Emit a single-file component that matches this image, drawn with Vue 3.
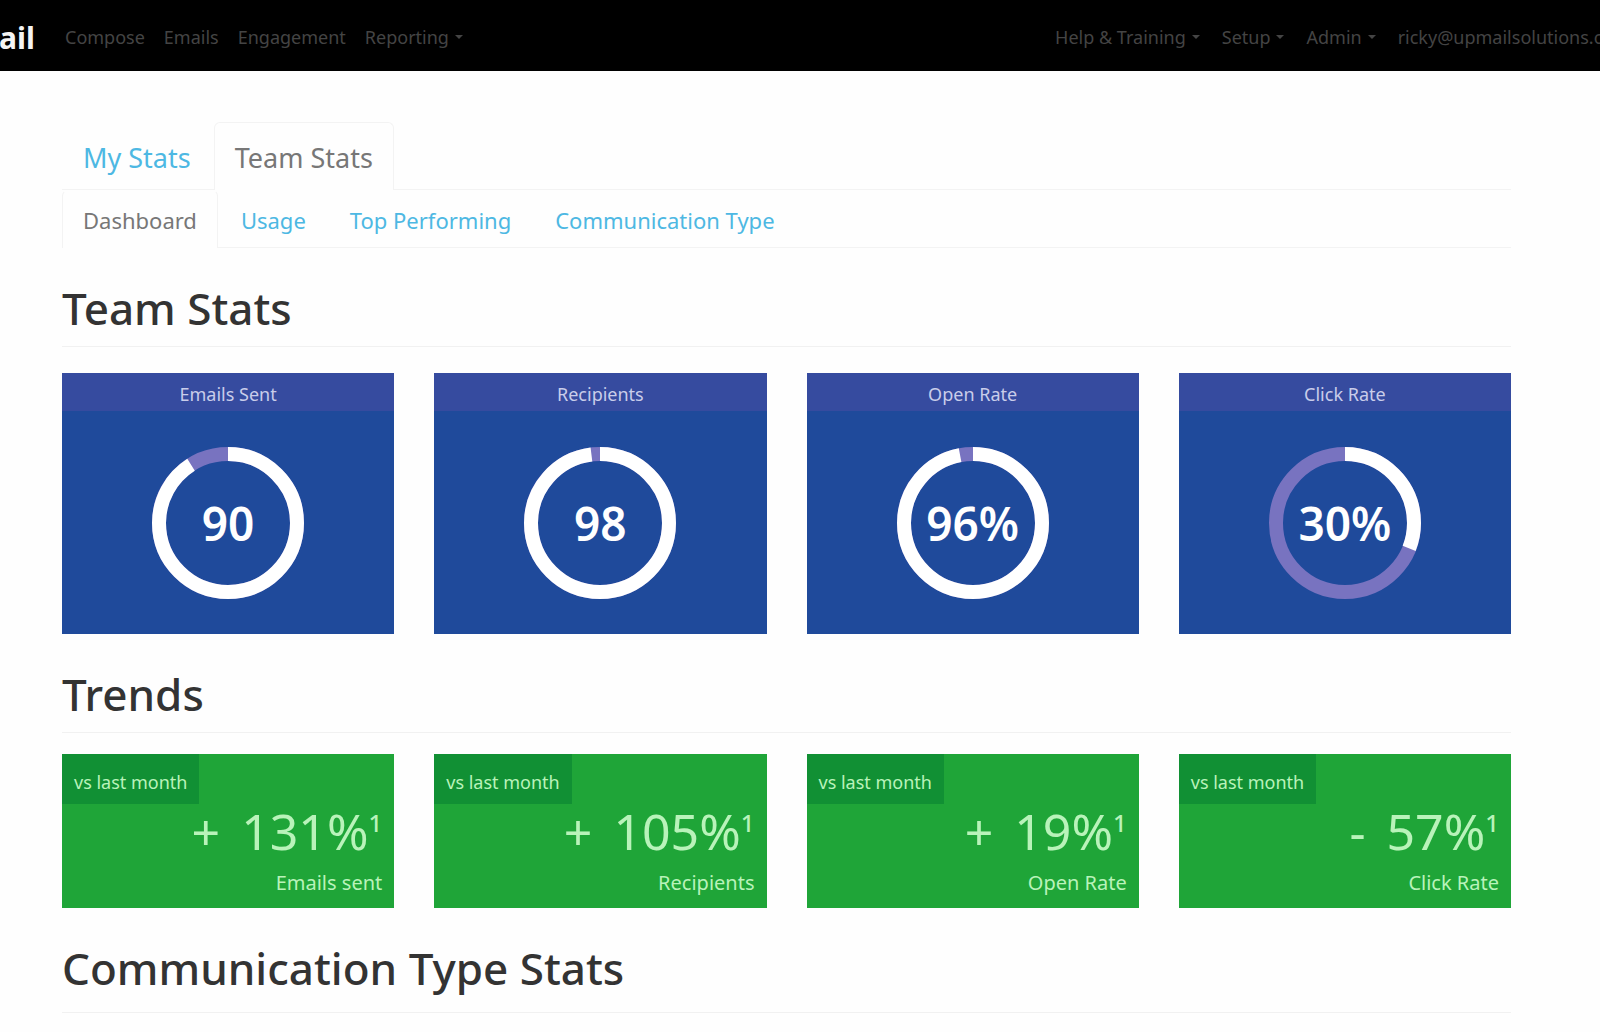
<script setup>
const leftLinks = [
  { label: 'Compose' },
  { label: 'Emails' },
  { label: 'Engagement' },
  { label: 'Reporting', menu: true },
]
const rightLinks = [
  { label: 'Help & Training', menu: true },
  { label: 'Setup', menu: true },
  { label: 'Admin', menu: true },
  { label: 'ricky@upmailsolutions.com' },
]
const subTabs = ['Dashboard', 'Usage', 'Top Performing', 'Communication Type']
const stats = [
  { label: 'Emails Sent', value: '90', percent: 91 },
  { label: 'Recipients', value: '98', percent: 98 },
  { label: 'Open Rate', value: '96%', percent: 97 },
  { label: 'Click Rate', value: '30%', percent: 31 },
]
const trends = [
  { label: 'Emails sent', sign: '+', value: '131%' },
  { label: 'Recipients', sign: '+', value: '105%' },
  { label: 'Open Rate', sign: '+', value: '19%' },
  { label: 'Click Rate', sign: '-', value: '57%' },
]
</script>

<template>
  <header class="topbar">
    <a class="brand" href="#">ail</a>
    <nav class="links">
      <a v-for="l in leftLinks" :key="l.label" href="#">{{ l.label }}<i v-if="l.menu" class="caret"></i></a>
    </nav>
    <nav class="links account">
      <a v-for="l in rightLinks" :key="l.label" href="#">{{ l.label }}<i v-if="l.menu" class="caret"></i></a>
    </nav>
  </header>

  <main class="page">
    <nav class="tabs">
      <a href="#">My Stats</a>
      <a href="#" class="active">Team Stats</a>
    </nav>
    <nav class="tabs sub">
      <a v-for="(t, i) in subTabs" :key="t" href="#" :class="{ active: i === 0 }">{{ t }}</a>
    </nav>

    <h2>Team Stats</h2>
    <section class="grid">
      <article v-for="s in stats" :key="s.label" class="stat">
        <h3>{{ s.label }}</h3>
        <div class="dial">
          <svg viewBox="0 0 152 152" aria-hidden="true">
            <circle class="track" cx="76" cy="76" r="69" />
            <circle class="value" cx="76" cy="76" r="69" pathLength="100" :stroke-dasharray="`${s.percent} 100`" />
          </svg>
          <strong>{{ s.value }}</strong>
        </div>
      </article>
    </section>

    <h2 class="tight">Trends</h2>
    <section class="grid">
      <article v-for="t in trends" :key="t.label" class="trend">
        <span class="badge">vs last month</span>
        <p class="change"><span class="sign">{{ t.sign }}</span> {{ t.value }}<sup>1</sup></p>
        <p class="name">{{ t.label }}</p>
      </article>
    </section>

    <h2 class="last">Communication Type Stats</h2>
  </main>
</template>

<style>
body {
  margin: 0;
  background: #fefefe;
  overflow-x: hidden;
}
</style>

<style scoped>
.topbar,
.page {
  font-family: "Noto Sans", "Open Sans", sans-serif;
}
a {
  text-decoration: none;
}
.topbar {
  display: flex;
  align-items: center;
  height: 71px;
  overflow: hidden;
  background: #000;
  white-space: nowrap;
}
.brand {
  display: flex;
  justify-content: flex-end;
  width: 35px;
  flex: none;
  padding-top: 4px;
  color: #f4f4f4;
  font-size: 30px;
  font-weight: 700;
}
.links {
  display: flex;
  gap: 19px;
  margin-left: 30px;
  padding-top: 2px;
  font-size: 18px;
}
.links a {
  color: #444;
}
.account {
  gap: 22px;
  margin-left: auto;
  margin-right: -30px;
}
.caret {
  display: inline-block;
  margin-left: 6px;
  vertical-align: 5px;
  border: 4px solid transparent;
  border-top-color: currentColor;
  border-bottom: 0;
}
.page {
  padding: 51px 89px 0 62px;
  color: #333;
}
.tabs {
  display: flex;
  gap: 2px;
  height: 67px;
  border-bottom: 1px solid #f3f3f3;
  font-size: 27px;
  line-height: 70px;
}
.tabs a {
  box-sizing: border-box;
  height: 68px;
  padding: 0 20px;
  border: 1px solid transparent;
  border-bottom: 0;
  color: #4db8e3;
  white-space: nowrap;
}
.tabs .active {
  border-color: #f3f3f3;
  border-radius: 6px 6px 0 0;
  background: #fefefe;
  color: #777;
}
.sub {
  height: 57px;
  font-size: 22px;
  line-height: 58px;
}
.sub a {
  height: 58px;
}
.sub .active {
  border-top-color: transparent;
}
h2 {
  margin: 0 0 26px;
  padding: 28px 0 6px;
  border-bottom: 1px solid #f1f1f1;
  font-size: 44px;
  font-weight: 500;
  line-height: 64px;
}
.tight {
  margin-bottom: 21px;
}
.last {
  padding-bottom: 12px;
}
.grid {
  display: grid;
  grid-template-columns: repeat(4, 1fr);
  gap: 40px;
}
.stat {
  background: #1f4a9b;
  color: #fff;
}
h3 {
  margin: 0;
  padding-top: 4px;
  background: #364b9f;
  color: #c9cdea;
  font-size: 18px;
  font-weight: 400;
  line-height: 34px;
  text-align: center;
}
.dial {
  display: grid;
  place-items: center;
  height: 223px;
}
.dial > * {
  grid-area: 1 / 1;
}
.dial svg {
  width: 152px;
  transform: rotate(-90deg);
}
circle {
  fill: none;
  stroke-width: 14px;
}
.track {
  stroke: #7873c0;
}
.value {
  stroke: #fff;
}
.dial strong {
  font-size: 46px;
  font-weight: 600;
  line-height: 48px;
}
.trend {
  display: flex;
  flex-direction: column;
  height: 154px;
  background: #1fa538;
  color: #b9f3ba;
}
.badge {
  align-self: flex-start;
  padding: 6px 12px 0;
  background: #119034;
  font-size: 18px;
  line-height: 44px;
}
p {
  margin: 0;
  padding-right: 12px;
  text-align: right;
}
.change {
  font-size: 50px;
  line-height: 54px;
}
.sign {
  margin-right: 8px;
}
.change sup {
  font-size: 24px;
  font-weight: 500;
  line-height: 1;
}
.name {
  font-size: 20px;
  line-height: 50px;
}
</style>
